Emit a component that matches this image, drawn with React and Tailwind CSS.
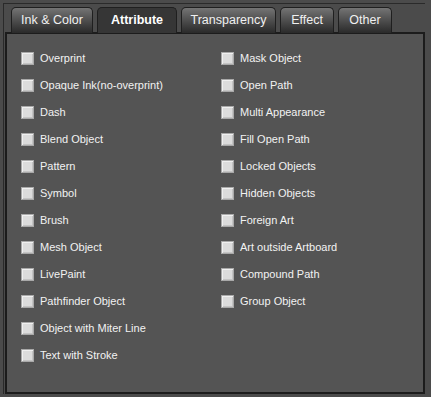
import React, { useState } from 'react';

const TABS = ['Ink & Color', 'Attribute', 'Transparency', 'Effect', 'Other'];

const LEFT = [
  'Overprint',
  'Opaque Ink(no-overprint)',
  'Dash',
  'Blend Object',
  'Pattern',
  'Symbol',
  'Brush',
  'Mesh Object',
  'LivePaint',
  'Pathfinder Object',
  'Object with Miter Line',
  'Text with Stroke',
];

const RIGHT = [
  'Mask Object',
  'Open Path',
  'Multi Appearance',
  'Fill Open Path',
  'Locked Objects',
  'Hidden Objects',
  'Foreign Art',
  'Art outside Artboard',
  'Compound Path',
  'Group Object',
];

const Check = ({ label }) => {
  const [on, setOn] = useState(false);
  return (
    <label className="flex items-center h-[27px] cursor-pointer" onClick={() => setOn(!on)}>
      <span className="w-[13px] h-[13px] border border-[#a9a9a9] bg-[#dcdcdc] shadow-[inset_1px_1px_0_#f0f0f0,inset_-1px_-1px_0_#c4c4c4] flex items-center justify-center text-[10px] leading-none text-[#333]">
        {on ? '✓' : ''}
      </span>
      <span className="ml-[6px] text-[11px] text-[#f2f2f2]">{label}</span>
    </label>
  );
};

const App = () => {
  const [active, setActive] = useState('Attribute');

  return (
    <div
      className="w-[431px] h-[397px] bg-[#4b4b4b] pt-[3px] pl-[3px] overflow-hidden"
      style={{ fontFamily: '"Liberation Sans", Arial, sans-serif' }}
    >
      <div className="w-[422px] border-t border-l border-[#2a2a2a] pl-[1px]">
        <div className="flex items-end gap-[4px] pl-[6px] pt-[2px] h-[28px]">
          {TABS.map((t) => (
            <button
              key={t}
              onClick={() => setActive(t)}
              className={`h-[26px] -mb-px rounded-t-[5px] border border-b-0 border-[#1f1f1f] px-[6px] text-[12.5px] ${
                active === t
                  ? 'bg-[#363636] text-white font-bold'
                  : 'bg-gradient-to-b from-[#747474] via-[#4e4e4e] to-[#2a2a2a] text-[#f0f0f0]'
              } ${t === 'Ink & Color' ? 'w-[82px]' : t === 'Attribute' ? 'w-[80px]' : t === 'Transparency' ? 'w-[95px]' : 'w-[54px]'}`}
            >
              {t}
            </button>
          ))}
        </div>
        <div className="h-[362px] bg-[#545454] border-2 border-[#1c1c1c] pt-[11px] pl-[14px] flex">
          <div className="w-[200px] flex flex-col">
            {LEFT.map((l) => (
              <Check key={l} label={l} />
            ))}
          </div>
          <div className="w-[200px] flex flex-col">
            {RIGHT.map((l) => (
              <Check key={l} label={l} />
            ))}
          </div>
        </div>
      </div>
    </div>
  );
};

export default App;
